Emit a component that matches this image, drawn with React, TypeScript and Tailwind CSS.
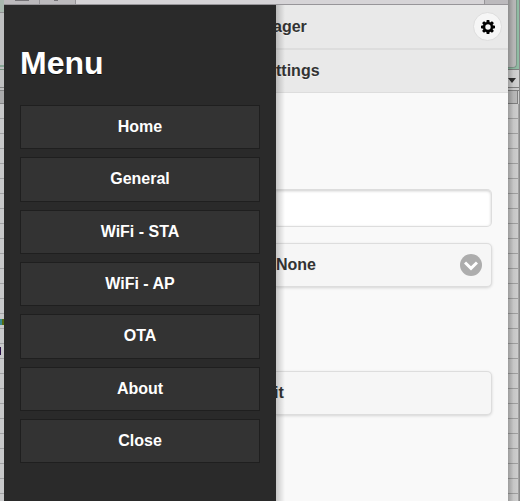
const items = ["Home", "General", "WiFi - STA", "WiFi - AP", "OTA", "About", "Close"];

function Gear() {
  return (
    <svg viewBox="-7 -7 14 14" className="size-[14px]">
      <circle r="3.95" fill="none" stroke="#000" strokeWidth="2.5" />
      {[0, 45, 90, 135, 180, 225, 270, 315].map((a) => (
        <path key={a} d="M-1.7 -4.6L-1.3 -7H1.3L1.7 -4.6Z" transform={`rotate(${a})`} />
      ))}
    </svg>
  );
}

function LeftStrip() {
  return (
    <div className="flex w-1 shrink-0 flex-col overflow-hidden bg-[#bfc0c1]">
      <div className="h-[13px] shrink-0 border-b border-[#929394] bg-[#a9b8af]" />
      <div className="h-[54px] shrink-0 border-b-2 border-[#87a696]" />
      <div className="h-[3px] shrink-0 border-b border-[#78927f]" />
      <div className="h-[18px] shrink-0 border-b border-[#858687]" />
      <div className="h-[3px] shrink-0 border-b border-[#858687]" />
      <div className="h-[13px] shrink-0 border-b border-[#858687] bg-[#aaabac]" />
      <div className="flex flex-1 flex-col bg-[#c8c9ca] bg-[repeating-linear-gradient(to_bottom,transparent_0px,transparent_14px,#a2a3a5_14px,#a2a3a5_15px)]">
        <div className="mt-[215px] h-[6px] w-1 border-r-2 border-[#536c13] bg-[#36888d]" />
        <div className="mt-[22px] h-[8px] w-px bg-[#291047]" />
      </div>
    </div>
  );
}

function RightStrip() {
  return (
    <div className="relative flex w-3 shrink-0 flex-col bg-[#d0d0d0]">
      <div className="flex h-[70px] shrink-0 border-b border-[#818181] bg-[#91bda5]">
        <div className="h-[68px] w-[9px] rounded-br-[4px] border-r border-b border-[#819b8c] bg-[#bdbdbd]" />
        <div className="ml-auto w-px bg-[#888]" />
      </div>
      <div className="flex h-[18px] shrink-0 items-center border-b border-[#818181] bg-[#d3d3d3]">
        <svg viewBox="0 0 8 5" className="mt-[3px] h-[5px] w-[8px]"><path d="M0 0H8L4 5Z" fill="#303030" /></svg>
      </div>
      <div className="h-[3px] shrink-0 border-b border-[#818181]" />
      <div className="mr-[2px] h-[13px] shrink-0 border-r border-b border-[#818181] bg-[#bcbcbc]" />
      <div className="mr-px flex-1 border-r border-[#a2a2a2] bg-[repeating-linear-gradient(to_bottom,transparent_0px,transparent_14px,#a2a2a2_14px,#a2a2a2_15px)]" />
      <div className="absolute inset-0 border-r border-[#898989] bg-linear-to-r from-black/25 via-black/5 to-transparent" />
    </div>
  );
}

export default function App() {
  return (
    <div className="flex h-[501px] w-[520px] overflow-hidden bg-[#c8c9ca] font-['Liberation_Sans',Arial,sans-serif] text-[16px]">
      <LeftStrip />
      <div className="flex w-[504px] shrink-0 flex-col">
        <div className="flex h-[5px] shrink-0 justify-between border-b border-[#979599] bg-[#d6d4d7]">
          <div className="flex w-[72px] border-r border-[#979599] bg-[#bcbabd]">
            <div className="w-[36px] border-r border-[#979599] pl-[11px]"><div className="h-px w-[14px] bg-[#777579]" /></div>
            <div className="pl-[14px]"><div className="h-px w-[4px] bg-[#777579]" /></div>
          </div>
          <div className="w-6 border-l border-[#979599] bg-[#bcbabd]" />
        </div>
        <div className="flex flex-1">
          <nav className="flex w-[272px] shrink-0 flex-col bg-[#2a2a2a] px-4 font-bold text-white [text-shadow:0_1px_0_#111]">
            <h1 className="mt-[37px] h-[63px] text-[32px] leading-[42px]">Menu</h1>
            <div className="flex flex-col gap-2">
              {items.map((item) => (
                <button key={item} className="flex h-[44.33px] items-center justify-center border border-[#1f1f1f] bg-[#333] pb-[0.6px]">
                  {item}
                </button>
              ))}
            </div>
          </nav>
          <main className="relative w-[232px] shrink-0 overflow-hidden bg-[#f9f9f9] font-bold text-[#333] [text-shadow:0_1px_0_#f3f3f3]">
            <header className="flex h-[45px] items-center justify-between border-b-2 border-[#dddddd] bg-[#e9e9e9] pr-[6px]">
              <span className="-ml-[3px]">ager</span>
              <button className="flex size-[29px] items-center justify-center rounded-full border border-[#ddd] bg-[#f6f6f6]">
                <Gear />
              </button>
            </header>
            <div className="flex h-[43px] items-center border-b border-[#ddd] bg-[#e9e9e9] pb-px">
              <span>ttings</span>
            </div>
            <div className="mt-[96px] mr-4 h-[38px] rounded-r-[5px] border border-l-0 border-[#ddd] bg-white shadow-[inset_0_1px_3px_rgba(0,0,0,0.2)]" />
            <div className="mt-4 mr-4 flex h-[44px] items-center justify-between rounded-r-[5px] border border-l-0 border-[#ddd] bg-[#f6f6f6] pr-[9px] shadow-[0_1px_3px_rgba(0,0,0,0.15)]">
              <span className="pb-px">None</span>
              <span className="flex size-[22px] items-center justify-center rounded-full bg-[#adadad]">
                <svg viewBox="0 0 14 14" className="size-[14px]">
                  <path fill="#fff" d="M11.949 3.404L7 8.354 2.05 3.404-.071 5.525 7 12.597 14.07 5.525Z" />
                </svg>
              </span>
            </div>
            <div className="mt-[84px] mr-4 flex h-[44px] items-center rounded-r-[5px] border border-l-0 border-[#ddd] bg-[#f6f6f6] pb-px shadow-[0_1px_3px_rgba(0,0,0,0.15)]">
              <span className="-ml-[2px]">it</span>
            </div>
            <div className="absolute inset-y-0 left-0 w-[9px] bg-linear-to-r from-black/20 via-black/10 to-transparent" />
          </main>
        </div>
      </div>
      <RightStrip />
    </div>
  );
}
